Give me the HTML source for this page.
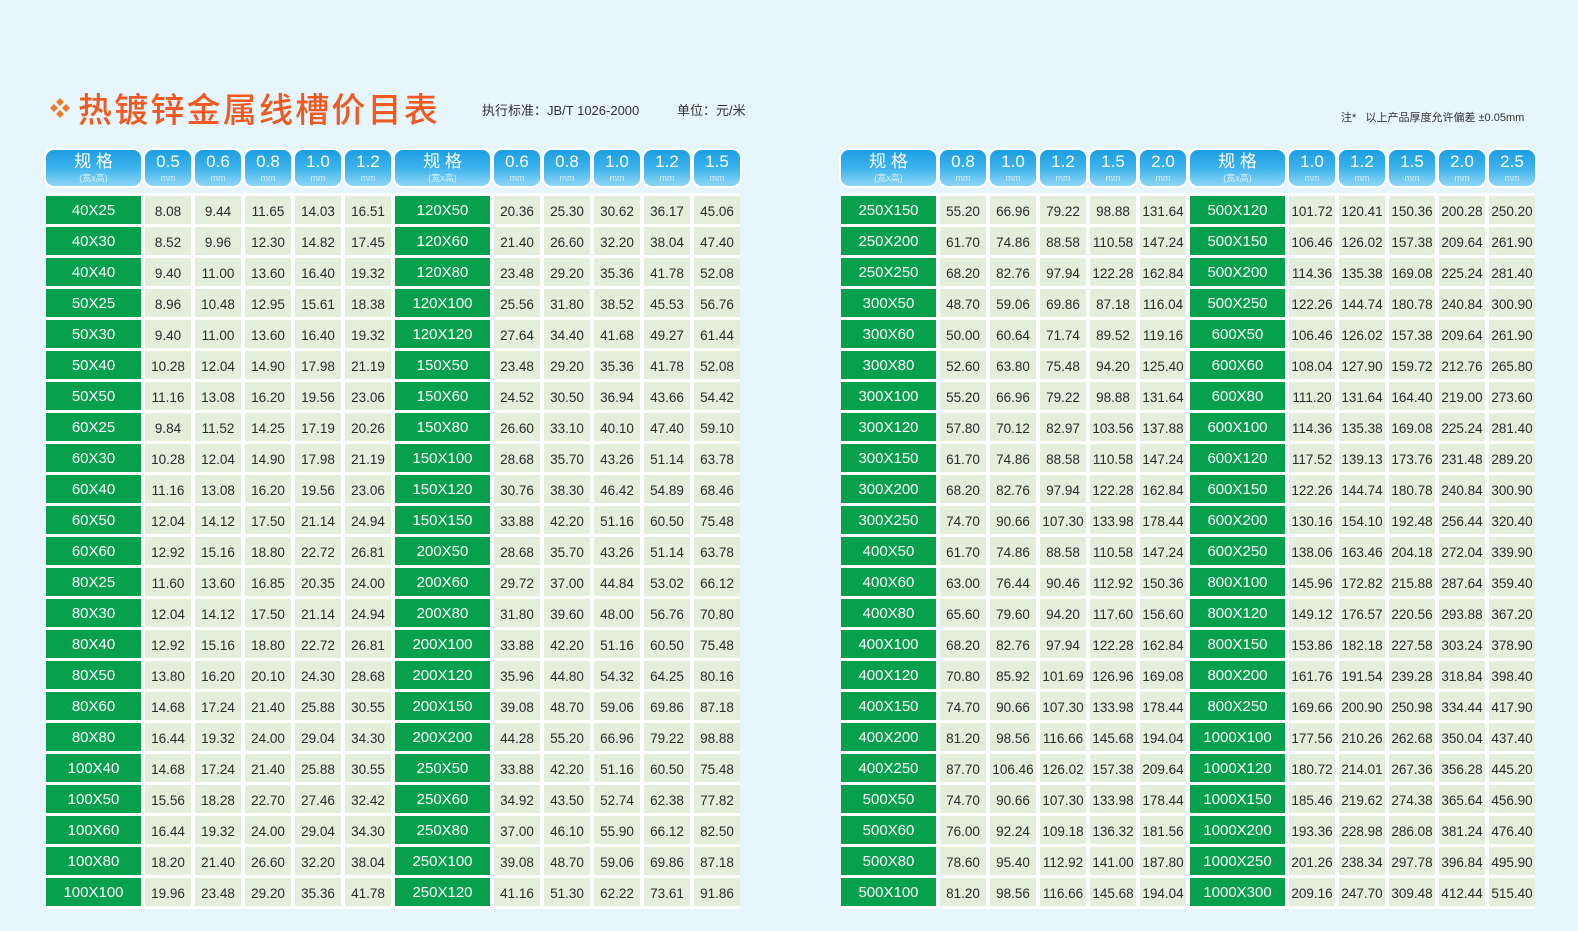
<!DOCTYPE html>
<html><head><meta charset="utf-8">
<style>
body{margin:0;width:1578px;height:931px;background:#e7f5fc;position:relative;overflow:hidden;font-family:"Liberation Sans","Noto Sans CJK SC",sans-serif;}
.title{position:absolute;left:78px;top:86px;font-size:34px;color:#f05a22;letter-spacing:2.2px;font-family:"Noto Sans CJK SC",sans-serif;font-weight:500;line-height:44px;white-space:nowrap}
.std{position:absolute;top:100px;font-size:13px;color:#333;white-space:nowrap}
.note{position:absolute;left:1341px;top:109px;font-size:11px;color:#333;white-space:nowrap}
.hd{position:absolute;top:150px;display:grid;grid-template-columns:95px repeat(5,46px) 95px repeat(5,46px);column-gap:4px;}
.hd>div{height:36px;border-radius:8px;background:linear-gradient(#1c9ee2,#3db3ec 50%,#8fd6f5);color:#fff;text-align:center;box-shadow:0 0 0 2px #fff;}
.hd .n{font-size:17px;line-height:20px;padding-top:2px}
.hd .u{font-size:9px;line-height:12px;color:#d8f0fb}
.bd{position:absolute;top:193px;background:#fff;padding:3px 0 3px 0;display:grid;grid-template-columns:95px repeat(5,46px) 95px repeat(5,46px);column-gap:4px;row-gap:3px;grid-auto-rows:28px;}
.bd>div{background:#e3eedb;color:#2a2a2a;font-size:13.5px;text-align:center;line-height:31px;white-space:nowrap;overflow:hidden}
.bd>.s{background:#07a04c;color:#fff;font-size:15px;line-height:29px}
</style></head><body>
<svg style="position:absolute;left:48px;top:96px" width="24" height="24" viewBox="0 0 24 24"><g fill="#f07a2a"><path d="M12 2l4 4-4 4-4-4z"/><path d="M12 14l4 4-4 4-4-4z"/><path d="M2 12l4-4 4 4-4 4z"/><path d="M14 12l4-4 4 4-4 4z"/></g></svg>
<div class="title">热镀锌金属线槽价目表</div>
<div class="std" style="left:482px">执行标准：JB/T 1026-2000</div>
<div class="std" style="left:677px">单位：元/米</div>
<div class="note">注*&nbsp;&nbsp;&nbsp;以上产品厚度允许偏差 ±0.05mm</div>

<div class="hd" style="left:46px">
<div><div class="n">规 格</div><div class="u">(宽x高)</div></div>
<div><div class="n">0.5</div><div class="u">mm</div></div><div><div class="n">0.6</div><div class="u">mm</div></div><div><div class="n">0.8</div><div class="u">mm</div></div><div><div class="n">1.0</div><div class="u">mm</div></div><div><div class="n">1.2</div><div class="u">mm</div></div>
<div><div class="n">规 格</div><div class="u">(宽x高)</div></div>
<div><div class="n">0.6</div><div class="u">mm</div></div><div><div class="n">0.8</div><div class="u">mm</div></div><div><div class="n">1.0</div><div class="u">mm</div></div><div><div class="n">1.2</div><div class="u">mm</div></div><div><div class="n">1.5</div><div class="u">mm</div></div>
</div>
<div class="hd" style="left:841px">
<div><div class="n">规 格</div><div class="u">(宽x高)</div></div>
<div><div class="n">0.8</div><div class="u">mm</div></div><div><div class="n">1.0</div><div class="u">mm</div></div><div><div class="n">1.2</div><div class="u">mm</div></div><div><div class="n">1.5</div><div class="u">mm</div></div><div><div class="n">2.0</div><div class="u">mm</div></div>
<div><div class="n">规 格</div><div class="u">(宽x高)</div></div>
<div><div class="n">1.0</div><div class="u">mm</div></div><div><div class="n">1.2</div><div class="u">mm</div></div><div><div class="n">1.5</div><div class="u">mm</div></div><div><div class="n">2.0</div><div class="u">mm</div></div><div><div class="n">2.5</div><div class="u">mm</div></div>
</div>

<div class="bd" style="left:46px">
<div class="s">40X25</div><div>8.08</div><div>9.44</div><div>11.65</div><div>14.03</div><div>16.51</div><div class="s">120X50</div><div>20.36</div><div>25.30</div><div>30.62</div><div>36.17</div><div>45.06</div>
<div class="s">40X30</div><div>8.52</div><div>9.96</div><div>12.30</div><div>14.82</div><div>17.45</div><div class="s">120X60</div><div>21.40</div><div>26.60</div><div>32.20</div><div>38.04</div><div>47.40</div>
<div class="s">40X40</div><div>9.40</div><div>11.00</div><div>13.60</div><div>16.40</div><div>19.32</div><div class="s">120X80</div><div>23.48</div><div>29.20</div><div>35.36</div><div>41.78</div><div>52.08</div>
<div class="s">50X25</div><div>8.96</div><div>10.48</div><div>12.95</div><div>15.61</div><div>18.38</div><div class="s">120X100</div><div>25.56</div><div>31.80</div><div>38.52</div><div>45.53</div><div>56.76</div>
<div class="s">50X30</div><div>9.40</div><div>11.00</div><div>13.60</div><div>16.40</div><div>19.32</div><div class="s">120X120</div><div>27.64</div><div>34.40</div><div>41.68</div><div>49.27</div><div>61.44</div>
<div class="s">50X40</div><div>10.28</div><div>12.04</div><div>14.90</div><div>17.98</div><div>21.19</div><div class="s">150X50</div><div>23.48</div><div>29.20</div><div>35.36</div><div>41.78</div><div>52.08</div>
<div class="s">50X50</div><div>11.16</div><div>13.08</div><div>16.20</div><div>19.56</div><div>23.06</div><div class="s">150X60</div><div>24.52</div><div>30.50</div><div>36.94</div><div>43.66</div><div>54.42</div>
<div class="s">60X25</div><div>9.84</div><div>11.52</div><div>14.25</div><div>17.19</div><div>20.26</div><div class="s">150X80</div><div>26.60</div><div>33.10</div><div>40.10</div><div>47.40</div><div>59.10</div>
<div class="s">60X30</div><div>10.28</div><div>12.04</div><div>14.90</div><div>17.98</div><div>21.19</div><div class="s">150X100</div><div>28.68</div><div>35.70</div><div>43.26</div><div>51.14</div><div>63.78</div>
<div class="s">60X40</div><div>11.16</div><div>13.08</div><div>16.20</div><div>19.56</div><div>23.06</div><div class="s">150X120</div><div>30.76</div><div>38.30</div><div>46.42</div><div>54.89</div><div>68.46</div>
<div class="s">60X50</div><div>12.04</div><div>14.12</div><div>17.50</div><div>21.14</div><div>24.94</div><div class="s">150X150</div><div>33.88</div><div>42.20</div><div>51.16</div><div>60.50</div><div>75.48</div>
<div class="s">60X60</div><div>12.92</div><div>15.16</div><div>18.80</div><div>22.72</div><div>26.81</div><div class="s">200X50</div><div>28.68</div><div>35.70</div><div>43.26</div><div>51.14</div><div>63.78</div>
<div class="s">80X25</div><div>11.60</div><div>13.60</div><div>16.85</div><div>20.35</div><div>24.00</div><div class="s">200X60</div><div>29.72</div><div>37.00</div><div>44.84</div><div>53.02</div><div>66.12</div>
<div class="s">80X30</div><div>12.04</div><div>14.12</div><div>17.50</div><div>21.14</div><div>24.94</div><div class="s">200X80</div><div>31.80</div><div>39.60</div><div>48.00</div><div>56.76</div><div>70.80</div>
<div class="s">80X40</div><div>12.92</div><div>15.16</div><div>18.80</div><div>22.72</div><div>26.81</div><div class="s">200X100</div><div>33.88</div><div>42.20</div><div>51.16</div><div>60.50</div><div>75.48</div>
<div class="s">80X50</div><div>13.80</div><div>16.20</div><div>20.10</div><div>24.30</div><div>28.68</div><div class="s">200X120</div><div>35.96</div><div>44.80</div><div>54.32</div><div>64.25</div><div>80.16</div>
<div class="s">80X60</div><div>14.68</div><div>17.24</div><div>21.40</div><div>25.88</div><div>30.55</div><div class="s">200X150</div><div>39.08</div><div>48.70</div><div>59.06</div><div>69.86</div><div>87.18</div>
<div class="s">80X80</div><div>16.44</div><div>19.32</div><div>24.00</div><div>29.04</div><div>34.30</div><div class="s">200X200</div><div>44.28</div><div>55.20</div><div>66.96</div><div>79.22</div><div>98.88</div>
<div class="s">100X40</div><div>14.68</div><div>17.24</div><div>21.40</div><div>25.88</div><div>30.55</div><div class="s">250X50</div><div>33.88</div><div>42.20</div><div>51.16</div><div>60.50</div><div>75.48</div>
<div class="s">100X50</div><div>15.56</div><div>18.28</div><div>22.70</div><div>27.46</div><div>32.42</div><div class="s">250X60</div><div>34.92</div><div>43.50</div><div>52.74</div><div>62.38</div><div>77.82</div>
<div class="s">100X60</div><div>16.44</div><div>19.32</div><div>24.00</div><div>29.04</div><div>34.30</div><div class="s">250X80</div><div>37.00</div><div>46.10</div><div>55.90</div><div>66.12</div><div>82.50</div>
<div class="s">100X80</div><div>18.20</div><div>21.40</div><div>26.60</div><div>32.20</div><div>38.04</div><div class="s">250X100</div><div>39.08</div><div>48.70</div><div>59.06</div><div>69.86</div><div>87.18</div>
<div class="s">100X100</div><div>19.96</div><div>23.48</div><div>29.20</div><div>35.36</div><div>41.78</div><div class="s">250X120</div><div>41.16</div><div>51.30</div><div>62.22</div><div>73.61</div><div>91.86</div>
</div>

<div class="bd" style="left:841px">
<div class="s">250X150</div><div>55.20</div><div>66.96</div><div>79.22</div><div>98.88</div><div>131.64</div><div class="s">500X120</div><div>101.72</div><div>120.41</div><div>150.36</div><div>200.28</div><div>250.20</div>
<div class="s">250X200</div><div>61.70</div><div>74.86</div><div>88.58</div><div>110.58</div><div>147.24</div><div class="s">500X150</div><div>106.46</div><div>126.02</div><div>157.38</div><div>209.64</div><div>261.90</div>
<div class="s">250X250</div><div>68.20</div><div>82.76</div><div>97.94</div><div>122.28</div><div>162.84</div><div class="s">500X200</div><div>114.36</div><div>135.38</div><div>169.08</div><div>225.24</div><div>281.40</div>
<div class="s">300X50</div><div>48.70</div><div>59.06</div><div>69.86</div><div>87.18</div><div>116.04</div><div class="s">500X250</div><div>122.26</div><div>144.74</div><div>180.78</div><div>240.84</div><div>300.90</div>
<div class="s">300X60</div><div>50.00</div><div>60.64</div><div>71.74</div><div>89.52</div><div>119.16</div><div class="s">600X50</div><div>106.46</div><div>126.02</div><div>157.38</div><div>209.64</div><div>261.90</div>
<div class="s">300X80</div><div>52.60</div><div>63.80</div><div>75.48</div><div>94.20</div><div>125.40</div><div class="s">600X60</div><div>108.04</div><div>127.90</div><div>159.72</div><div>212.76</div><div>265.80</div>
<div class="s">300X100</div><div>55.20</div><div>66.96</div><div>79.22</div><div>98.88</div><div>131.64</div><div class="s">600X80</div><div>111.20</div><div>131.64</div><div>164.40</div><div>219.00</div><div>273.60</div>
<div class="s">300X120</div><div>57.80</div><div>70.12</div><div>82.97</div><div>103.56</div><div>137.88</div><div class="s">600X100</div><div>114.36</div><div>135.38</div><div>169.08</div><div>225.24</div><div>281.40</div>
<div class="s">300X150</div><div>61.70</div><div>74.86</div><div>88.58</div><div>110.58</div><div>147.24</div><div class="s">600X120</div><div>117.52</div><div>139.13</div><div>173.76</div><div>231.48</div><div>289.20</div>
<div class="s">300X200</div><div>68.20</div><div>82.76</div><div>97.94</div><div>122.28</div><div>162.84</div><div class="s">600X150</div><div>122.26</div><div>144.74</div><div>180.78</div><div>240.84</div><div>300.90</div>
<div class="s">300X250</div><div>74.70</div><div>90.66</div><div>107.30</div><div>133.98</div><div>178.44</div><div class="s">600X200</div><div>130.16</div><div>154.10</div><div>192.48</div><div>256.44</div><div>320.40</div>
<div class="s">400X50</div><div>61.70</div><div>74.86</div><div>88.58</div><div>110.58</div><div>147.24</div><div class="s">600X250</div><div>138.06</div><div>163.46</div><div>204.18</div><div>272.04</div><div>339.90</div>
<div class="s">400X60</div><div>63.00</div><div>76.44</div><div>90.46</div><div>112.92</div><div>150.36</div><div class="s">800X100</div><div>145.96</div><div>172.82</div><div>215.88</div><div>287.64</div><div>359.40</div>
<div class="s">400X80</div><div>65.60</div><div>79.60</div><div>94.20</div><div>117.60</div><div>156.60</div><div class="s">800X120</div><div>149.12</div><div>176.57</div><div>220.56</div><div>293.88</div><div>367.20</div>
<div class="s">400X100</div><div>68.20</div><div>82.76</div><div>97.94</div><div>122.28</div><div>162.84</div><div class="s">800X150</div><div>153.86</div><div>182.18</div><div>227.58</div><div>303.24</div><div>378.90</div>
<div class="s">400X120</div><div>70.80</div><div>85.92</div><div>101.69</div><div>126.96</div><div>169.08</div><div class="s">800X200</div><div>161.76</div><div>191.54</div><div>239.28</div><div>318.84</div><div>398.40</div>
<div class="s">400X150</div><div>74.70</div><div>90.66</div><div>107.30</div><div>133.98</div><div>178.44</div><div class="s">800X250</div><div>169.66</div><div>200.90</div><div>250.98</div><div>334.44</div><div>417.90</div>
<div class="s">400X200</div><div>81.20</div><div>98.56</div><div>116.66</div><div>145.68</div><div>194.04</div><div class="s">1000X100</div><div>177.56</div><div>210.26</div><div>262.68</div><div>350.04</div><div>437.40</div>
<div class="s">400X250</div><div>87.70</div><div>106.46</div><div>126.02</div><div>157.38</div><div>209.64</div><div class="s">1000X120</div><div>180.72</div><div>214.01</div><div>267.36</div><div>356.28</div><div>445.20</div>
<div class="s">500X50</div><div>74.70</div><div>90.66</div><div>107.30</div><div>133.98</div><div>178.44</div><div class="s">1000X150</div><div>185.46</div><div>219.62</div><div>274.38</div><div>365.64</div><div>456.90</div>
<div class="s">500X60</div><div>76.00</div><div>92.24</div><div>109.18</div><div>136.32</div><div>181.56</div><div class="s">1000X200</div><div>193.36</div><div>228.98</div><div>286.08</div><div>381.24</div><div>476.40</div>
<div class="s">500X80</div><div>78.60</div><div>95.40</div><div>112.92</div><div>141.00</div><div>187.80</div><div class="s">1000X250</div><div>201.26</div><div>238.34</div><div>297.78</div><div>396.84</div><div>495.90</div>
<div class="s">500X100</div><div>81.20</div><div>98.56</div><div>116.66</div><div>145.68</div><div>194.04</div><div class="s">1000X300</div><div>209.16</div><div>247.70</div><div>309.48</div><div>412.44</div><div>515.40</div>
</div>
</body></html>
